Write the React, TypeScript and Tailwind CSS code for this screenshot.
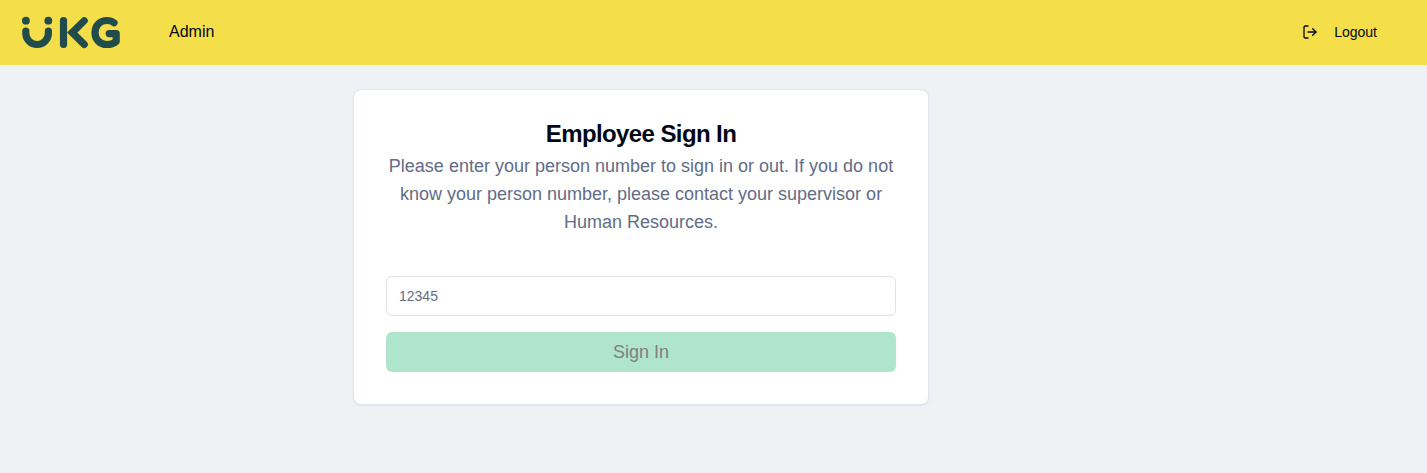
import { LogOut } from "lucide-react";

function Logo() {
  return (
    <svg
      width="100"
      height="33"
      viewBox="21 16 100 33"
      fill="none"
      stroke="#224b4b"
      strokeWidth="7.2"
      strokeLinecap="round"
      strokeLinejoin="round"
      role="img"
      aria-label="UKG"
    >
      <circle cx="25.9" cy="20.7" r="3.9" fill="#224b4b" stroke="none" />
      <circle cx="48.3" cy="20.7" r="3.9" fill="#224b4b" stroke="none" />
      <path d="M25.8 31V33.2a11.3 11.3 0 0 0 22.6 0V31" />
      <path d="M63.5 20.5V44.5" />
      <path d="M84.2 20.8L72.2 32.6L84.2 44.4" strokeLinejoin="miter" />
      <path d="M114 22.7C112 21.1 109.5 20.5 106.8 20.5C99.8 20.5 95 25.6 95 32.5C95 39.5 99.8 44.5 106.8 44.5C110.6 44.5 113.8 43.4 116.2 41.4V33.6H109.2" />
    </svg>
  );
}

function Header() {
  return (
    <header className="flex h-[65px] items-center justify-between bg-[#f4de4a] pr-[50px] pl-[21px]">
      <div className="flex items-center">
        <Logo />
        <a href="#" className="ml-12 pb-0.5 text-base">
          Admin
        </a>
      </div>
      <button type="button" className="flex items-center gap-4 pb-0.5 text-sm">
        <LogOut size={16} />
        Logout
      </button>
    </header>
  );
}

export default function App() {
  return (
    <div className="min-h-screen bg-[#f0f1f5] font-['Liberation_Sans',Arial,sans-serif] text-[#020817]">
      <Header />
      <main className="pt-6 pl-[353px]">
        <section className="w-full max-w-xl rounded-lg border border-[#e0e4ee] bg-white p-8 text-center shadow-[0_1px_2px_0_rgb(0_0_0/0.05)]">
          <h1 className="text-2xl leading-none font-semibold tracking-tight">Employee Sign In</h1>
          <p className="mt-1.5 text-lg text-[#616c87]">
            Please enter your person number to sign in or out. If you do not know your person number, please contact
            your supervisor or Human Resources.
          </p>
          <form className="mt-10 flex flex-col gap-4">
            <input
              type="text"
              placeholder="12345"
              className="h-10 w-full rounded-md border border-[#e0e2ec] bg-white px-3 text-sm placeholder:text-[#616c87]"
            />
            <button type="button" disabled className="h-10 rounded-md bg-[#afe5ca] text-lg text-[#808080]">
              Sign In
            </button>
          </form>
        </section>
      </main>
    </div>
  );
}
